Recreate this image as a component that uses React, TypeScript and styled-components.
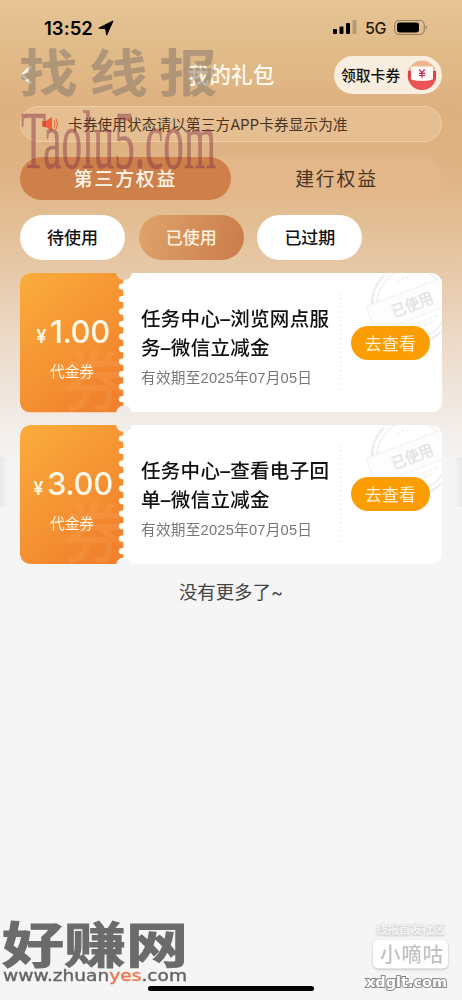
import React from "react";
import styled, { createGlobalStyle } from "styled-components";

const Global = createGlobalStyle`
  *{box-sizing:border-box}
  body{margin:0;background:#f5f5f5;font-family:Inter,"Noto Sans CJK SC",sans-serif;}
  button{font:inherit;border:0;padding:0;margin:0}
`;
const Screen = styled.main`
  position:relative;width:462px;height:1000px;overflow:hidden;
  background:linear-gradient(180deg,#e6c495 0,#e0b987 60px,#deb17f 110px,#dfb384 170px,#e3be94 220px,#e8cdb0 290px,#eddccc 350px,#f1e9e3 410px,#f5f5f5 465px);
`;
const StatusBar = styled.header`
  height:50px;padding:6px 34px 0 44px;display:flex;align-items:center;
`;
const Time = styled.span`font-size:18.5px;font-weight:600;letter-spacing:.05px;line-height:44px;margin-right:5px;`;
const StatusRight = styled.div`margin-left:auto;display:flex;align-items:center;`;
const Network = styled.span`font-size:16px;letter-spacing:-.4px;margin:0 8px 0 8px;color:#2a1c0c;font-weight:500;`;
const Nav = styled.nav`
  height:50px;padding:0 20px;display:grid;grid-template-columns:108px 1fr 108px;align-items:center;
`;
const Title = styled.h1`margin:0;text-align:center;font-size:21.7px;line-height:30px;padding-bottom:1px;font-weight:500;color:#fffaf0;`;
const Claim = styled.button`
  height:38px;border-radius:19px;background:#f8eee0;padding:0 5px 1px 7px;display:flex;align-items:center;justify-content:space-between;
  font-size:14.8px;font-weight:500;color:#17120e;
`;
const Notice = styled.div`
  height:36px;margin:6px 20px 0;border:1.5px solid #efcfa6;border-radius:18px;background:#e5be91;
  display:flex;align-items:center;padding-left:21px;font-size:14.65px;color:#49351f;
`;
const NoticeText = styled.span`margin-left:10px;padding-bottom:2px;white-space:nowrap;letter-spacing:.1px;`;
const Tabs = styled.div`
  height:43px;margin:15px 20px 0;display:grid;grid-template-columns:1fr 1fr;border-radius:22px;background:#e3b78a;
`;
const Tab = styled.button<{ $active?: boolean }>`
  border-radius:22px;background:${p => (p.$active ? "#cf804a" : "transparent")};
  color:${p => (p.$active ? "#fff8ec" : "#49351f")};font-size:18.8px;letter-spacing:1.9px;padding-bottom:2px;
  font-weight:${p => (p.$active ? 500 : 400)};
`;
const Filters = styled.div`display:flex;gap:13.7px;padding:15px 20px 0;`;
const Filter = styled.button<{ $active?: boolean }>`
  width:105px;height:44.5px;border-radius:23px;font-size:17px;font-weight:500;padding-bottom:1px;
  background:${p => (p.$active ? "linear-gradient(105deg,#dfa46b,#ca7b49)" : "#fff")};
  color:${p => (p.$active ? "#fff3e0" : "#111")};
`;
const List = styled.section`display:grid;gap:12px;padding:13.5px 20px 0;`;
const Card = styled.article`
  height:139.5px;display:grid;grid-template-columns:104px 217px 101px;position:relative;overflow:hidden;border-radius:10px;
`;
const CardShape = styled.svg`position:absolute;inset:0;`;
const Value = styled.div`
  position:relative;color:#fff9ea;display:flex;flex-direction:column;align-items:center;padding-top:40px;
`;
const Amount = styled.div`
  font-size:31px;line-height:38px;font-weight:500;white-space:nowrap;letter-spacing:-.4px;padding-left:2px;
  small{font-size:18px;font-weight:600;margin-right:4px;}
`;
const Kind = styled.span`font-size:14.7px;line-height:22px;margin-top:5px;`;
const Info = styled.div`position:relative;padding:32px 0 0 17px;white-space:nowrap;`;
const Name = styled.h2`margin:0;font-size:19.5px;letter-spacing:.3px;line-height:29px;font-weight:500;color:#111;`;
const Expiry = styled.p`
  margin:4px 0 0;font-family:"Liberation Sans","Noto Sans CJK SC",sans-serif;font-size:14.7px;line-height:22px;color:#777;letter-spacing:.2px;
`;
const Action = styled.div`position:relative;display:flex;align-items:center;padding-left:9.5px;`;
const View = styled.button`width:79.5px;height:34px;border-radius:17px;background:#fc9d04;color:#fff3d8;font-size:17px;font-weight:400;padding-bottom:1px;`;
const End = styled.p`margin:15px 0 0;text-align:center;font-size:18.4px;line-height:27px;color:#444;`;
const Handle = styled.i<{ $right?: boolean }>`
  position:absolute;top:457px;${p => (p.$right ? "right:0" : "left:0")};width:6px;height:50px;
  background:linear-gradient(${p => (p.$right ? "270deg" : "90deg")},#e9e9e9,#f1f1f1);
`;
const HomeBar = styled.i`position:absolute;left:148px;top:986px;width:166px;height:5px;border-radius:3px;background:#000;`;
const Marks = styled.svg`position:absolute;left:0;top:0;pointer-events:none;`;

const cjk = '"Noto Sans CJK SC",sans-serif';

function Shape({ id }: { id: string }) {
  return (
    <CardShape width="422" height="139.5" viewBox="0 0 422 139.5">
      <defs>
        <linearGradient id={`g${id}`} x1="0" y1="0" x2="0.7" y2="1">
          <stop offset="0" stopColor="#fbad3c" />
          <stop offset="1" stopColor="#f1812c" />
        </linearGradient>
        <mask id={`m${id}`}>
          <rect width="422" height="139.5" fill="#fff" />
          <circle cx="104" cy="-1" r="8" fill="#000" />
          <circle cx="104" cy="140.5" r="8" fill="#000" />
        </mask>
        <clipPath id={`c${id}`}><rect width="103" height="139.5" /></clipPath>
      </defs>
      <g mask={`url(#m${id})`}>
        <rect width="422" height="139.5" rx="10" fill="#fff" />
        <path d="M10 0H103.3V139.5H10A10 10 0 0 1 0 129.5V10A10 10 0 0 1 10 0Z" fill={`url(#g${id})`} />
        <g clipPath={`url(#c${id})`}>
          <text x="41" y="133" fontSize="66" fontFamily={cjk} fontWeight="500" fill="#ffb16a" opacity=".2">券</text>
        </g>
        {Array.from({ length: 10 }, (_, i) => (
          <rect key={i} x="98.8" y={10.4 + i * 12.52} width="9" height="6.2" rx="3.1" fill="#fff" />
        ))}
        <path d="M320.5 20V119" stroke="#e8e8e8" strokeDasharray="2 2.5" />
        <g transform="translate(392 31) rotate(-21)" fill="none" stroke="#ececec">
          <circle r="40" strokeWidth="2.2" strokeDasharray="34 2 9 1" />
          <circle r="35" strokeWidth="1.2" />
          <path d="M-6-26H-4M-1-27H1M4-26H6" strokeWidth="1.5" />
          <path d="M-20 20H20M-14 24H14" strokeWidth="1" strokeDasharray="4 2" />
          <rect x="-44" y="-14" width="88" height="28" fill="#fdfdfd" strokeWidth=".8" />
          <text y="6" textAnchor="middle" fontSize="14.5" fontFamily={cjk} fontWeight="500" fill="#dedede" stroke="none">已使用</text>
        </g>
      </g>
    </CardShape>
  );
}

const coupons = [
  { amount: "1.00", lines: ["任务中心–浏览网点服", "务–微信立减金"] },
  { amount: "3.00", lines: ["任务中心–查看电子回", "单–微信立减金"] },
];

export default function App() {
  return (
    <Screen>
      <Global />
      <StatusBar>
        <Time>13:52</Time>
        <svg width="16" height="16" viewBox="0 0 16 16"><path d="M.8 8.1 15 1 8.6 15.2 7.7 8.8Z" stroke="#000" strokeLinejoin="round" /></svg>
        <StatusRight>
          <svg width="24" height="16" viewBox="0 0 24 16">
            <rect x="0" y="9" width="4" height="5" rx="1" /><rect x="6.5" y="6.5" width="4" height="7.5" rx="1" />
            <rect x="13" y="3" width="4" height="11" rx="1" /><rect x="19.5" y="0" width="4" height="14" rx="1" opacity=".2" />
          </svg>
          <Network>5G</Network>
          <svg width="34" height="16" viewBox="0 0 34 16">
            <rect x=".7" y=".4" width="29.5" height="14" rx="4.2" fill="none" stroke="#8d765a" />
            <rect x="3" y="2.4" width="22" height="10" rx="2.3" /><path d="M31.7 5Q34 7.3 31.7 9.5Z" fill="#8d765a" />
          </svg>
        </StatusRight>
      </StatusBar>
      <Nav>
        <svg width="14" height="20" viewBox="0 0 14 20"><path d="M11 1.5 2 10l9 8.5" fill="none" stroke="#fff8ee" strokeWidth="2.6" /></svg>
        <Title>我的礼包</Title>
        <Claim>
          领取卡券
          <svg width="30" height="32" viewBox="0 0 30 32">
            <circle cx="15" cy="16" r="14.5" fill="#edb68c" />
            <path d="M1 12H29V20Q25 31 15 31T1 20Z" fill="#d9434a" />
            <path d="M4 7.5H26V22H4Z" fill="#fffaf8" />
            <path d="M1 18Q4 22 15 22T29 18V20Q25 31 15 31T1 20Z" fill="#ed5355" />
            <path d="m12.2 10.5 2.8 3.2 2.8-3.2M15 13.7V19M12 14.3H18M12 16.5H18" fill="none" stroke="#c42b55" strokeWidth="1.2" />
          </svg>
        </Claim>
      </Nav>
      <Notice>
        <svg width="16" height="16" viewBox="0 0 16 16">
          <path d="M0 5H4L10 1V15L4 11H0Z" fill="#ee6035" />
          <path d="M12 4.5Q14 8 12 11.5M14 2.5Q17 8 14 13.5" fill="none" stroke="#ee6035" />
        </svg>
        <NoticeText>卡券使用状态请以第三方APP卡券显示为准</NoticeText>
      </Notice>
      <Tabs><Tab $active>第三方权益</Tab><Tab>建行权益</Tab></Tabs>
      <Filters><Filter>待使用</Filter><Filter $active>已使用</Filter><Filter>已过期</Filter></Filters>
      <List>
        {coupons.map(c => (
          <Card key={c.amount}>
            <Shape id={c.amount[0]} />
            <Value><Amount><small>¥</small>{c.amount}</Amount><Kind>代金券</Kind></Value>
            <Info>
              <Name>{c.lines[0]}<br />{c.lines[1]}</Name>
              <Expiry>有效期至2025年07月05日</Expiry>
            </Info>
            <Action><View>去查看</View></Action>
          </Card>
        ))}
      </List>
      <End>没有更多了~</End>
      <Handle /><Handle $right />
      <HomeBar />
      <Marks width="462" height="1000" viewBox="0 0 462 1000">
        <g fontFamily={cjk} fontWeight="700" fill="#85776b" fillOpacity=".52">
          <text transform="translate(19 92) scale(1.15 1)" fontSize="51" letterSpacing="10">找线报</text>
        </g>
        <text x="21" y="168" fontFamily="Liberation Serif,serif" fontSize="82" fill="#88384b" fillOpacity=".48"
          stroke="#88384b" strokeOpacity=".2" textLength="195" lengthAdjust="spacingAndGlyphs">Taolu5.com</text>
        <text x="2" y="963" fontFamily={cjk} fontWeight="700" fontSize="49" fill="#6b6b6b" stroke="#6b6b6b" strokeWidth="1"
          textLength="186" lengthAdjust="spacingAndGlyphs">好赚网</text>
        <text x="3" y="981" fontFamily="DejaVu Sans,sans-serif" fontSize="15.5" fill="#666" stroke="#666" strokeWidth=".4"
          textLength="184" lengthAdjust="spacingAndGlyphs">www.zhuan<tspan fill="#ee7650" stroke="#ee7650">yes</tspan>.com</text>
        <g style={{ filter: "drop-shadow(0 1px 1px #bbb)" }}>
          <text x="376" y="934" fontFamily={cjk} fontWeight="700" fontSize="12" fill="#f3f3f3" textLength="69">线报首发社区</text>
          <rect x="373" y="940" width="75" height="28.5" rx="5" fill="#fff" />
        </g>
        <text x="380" y="962" fontFamily={cjk} fontWeight="500" fontSize="20.5" fill="#c3c3c3" textLength="63">小嘀咕</text>
        <text x="366" y="987" fontFamily="DejaVu Sans,sans-serif" fontWeight="700" fontSize="14" fill="#fff" stroke="#8a8a8a"
          strokeWidth="2" paintOrder="stroke" textLength="81" lengthAdjust="spacingAndGlyphs">xdglt.com</text>
      </Marks>
    </Screen>
  );
}
